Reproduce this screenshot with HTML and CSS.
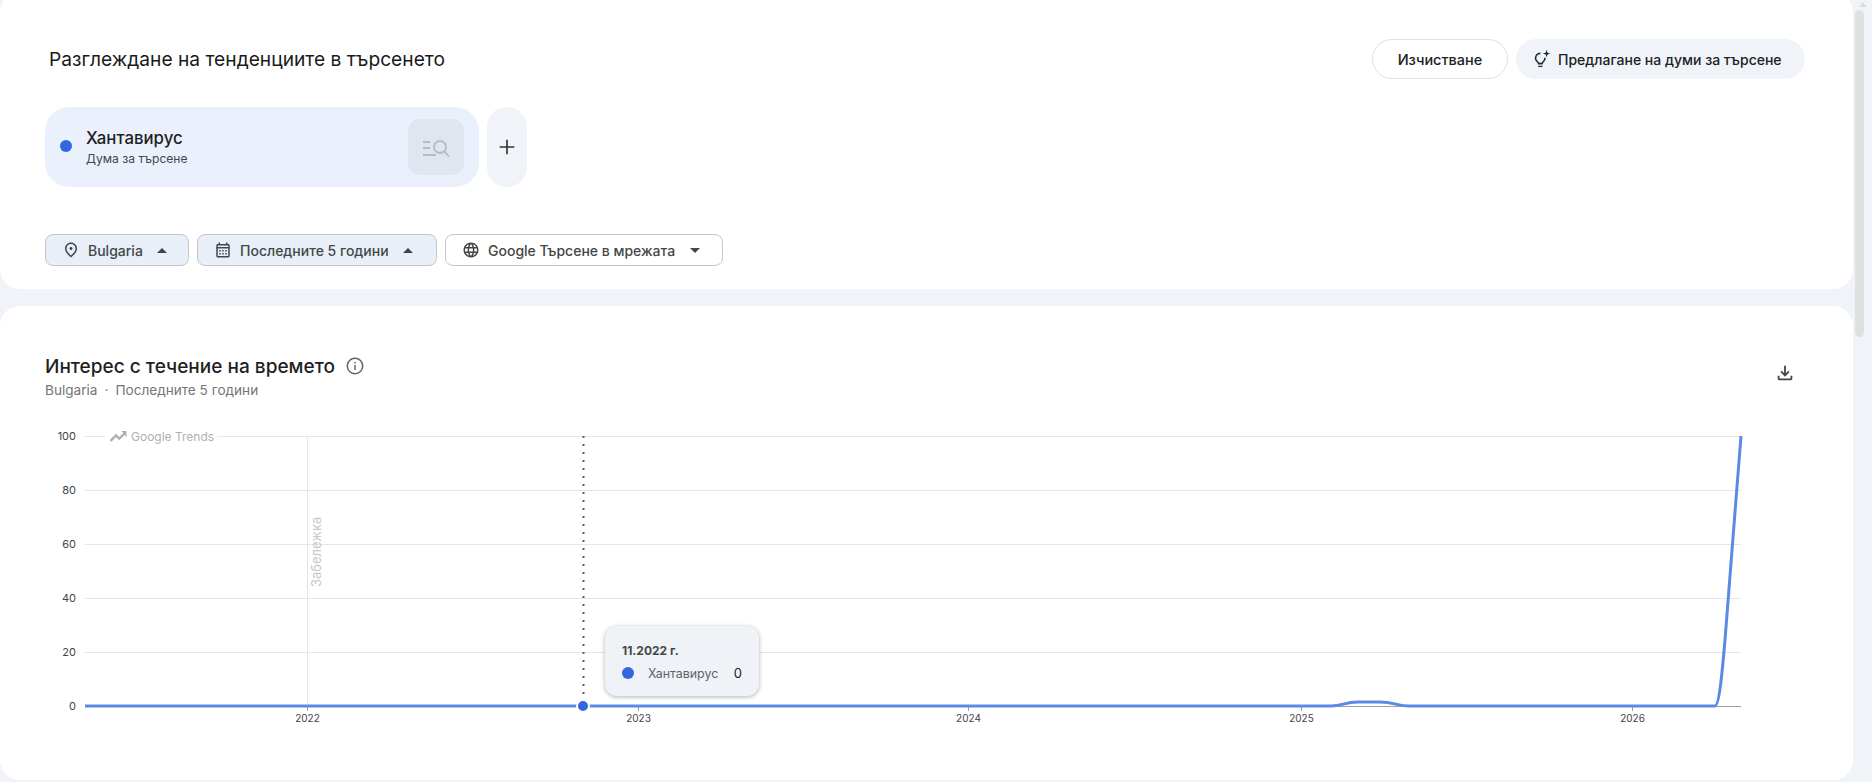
FILE: index.html
```html
<!DOCTYPE html>
<html lang="bg">
<head>
<meta charset="utf-8">
<title>Google Trends</title>
<link rel="stylesheet" href="styles.css">
</head>
<body>
<div class="page">
  <main class="main">
    <section class="card explore">
      <div class="head-row">
        <h1 class="title">Разглеждане на тенденциите в търсенето</h1>
        <div class="actions">
          <button class="btn btn-clear">Изчистване</button>
          <button class="btn btn-suggest">
            <svg class="ic-bulb" viewBox="0 0 24 24"><path d="M10 4.2a6.6 6.6 0 0 0-4.4 11.5c.9.9 1.4 1.6 1.4 2.8h6c0-1.2.5-1.9 1.4-2.8A6.6 6.6 0 0 0 16.600 10.600h-2a4.600 4.600 0 0 1-1.400 3.700c-.9.900-1.500 1.500-1.900 2.200H8.700c-.4-.700-1-1.300-1.900-2.200A4.600 4.600 0 0 1 10 6.200zM7.500 20h5v1.700h-5zM17.500 1l1.100 3.400L22 5.500l-3.400 1.100L17.500 10l-1.100-3.400L13 5.500l3.400-1.100z"/></svg>
            <span>Предлагане на думи за търсене</span>
          </button>
        </div>
      </div>
      <div class="terms">
        <div class="term">
          <span class="term-dot"></span>
          <div class="term-text">
            <div class="term-name">Хантавирус</div>
            <div class="term-kind">Дума за търсене</div>
          </div>
          <div class="term-icon">
            <svg viewBox="0 0 28 22"><path d="M1 6H8M1 12H8M1 19H14M22.300 15.300L27 20.500"/><circle cx="18" cy="11" r="6"/></svg>
          </div>
        </div>
        <button class="add-term"><svg viewBox="0 0 24 24"><path d="M11.100 4h1.800v7.100H20v1.800h-7.100V20h-1.800v-7.100H4v-1.800h7.100z"/></svg></button>
      </div>
      <div class="filters">
        <button class="filter open f-geo">
          <svg class="f-ic" viewBox="0 0 24 24"><path d="M12 12c-1.100 0-2-.9-2-2s.9-2 2-2 2 .9 2 2-.9 2-2 2zm6-1.800C18 6.570 15.350 4 12 4s-6 2.570-6 6.200c0 2.340 1.950 5.440 6 9.140 4.050-3.700 6-6.800 6-9.140zM12 2c4.200 0 8 3.220 8 8.200 0 3.320-2.670 7.250-8 11.800-5.330-4.550-8-8.480-8-11.800C4 5.220 7.800 2 12 2z"/></svg>
          <span>Bulgaria</span><i class="caret up"></i>
        </button>
        <button class="filter open f-time">
          <svg class="f-ic" viewBox="0 0 24 24"><path d="M19 4h-1V2h-2v2H8V2H6v2H5c-1.110 0-2 .9-2 2v14c0 1.100.89 2 2 2h14c1.100 0 2-.9 2-2V6c0-1.100-.9-2-2-2zm0 16H5V10h14v10zm0-12H5V6h14v2zM7 12h2v2H7zm4 0h2v2h-2zm4 0h2v2h-2zM7 16h2v2H7zm4 0h2v2h-2zm4 0h2v2h-2z"/></svg>
          <span>Последните 5 години</span><i class="caret up"></i>
        </button>
        <button class="filter f-prop">
          <svg class="f-ic" viewBox="0 0 24 24"><path d="M11.990 2C6.470 2 2 6.480 2 12s4.470 10 9.990 10C17.520 22 22 17.520 22 12S17.520 2 11.990 2zm6.930 6h-2.950c-.32-1.250-.78-2.450-1.380-3.560 1.840.63 3.370 1.910 4.330 3.560zM12 4.040c.83 1.200 1.480 2.530 1.910 3.960h-3.820c.43-1.430 1.080-2.760 1.910-3.960zM4.260 14C4.100 13.360 4 12.690 4 12s.1-1.360.26-2h3.380c-.08.66-.14 1.320-.14 2 0 .68.06 1.340.14 2H4.260zm.82 2h2.950c.32 1.250.78 2.450 1.380 3.560-1.840-.63-3.370-1.900-4.330-3.560zm2.950-8H5.080c.96-1.660 2.490-2.930 4.330-3.560C8.810 5.550 8.350 6.750 8.030 8zM12 19.960c-.83-1.200-1.480-2.530-1.910-3.960h3.820c-.43 1.430-1.080 2.760-1.910 3.960zM14.340 14H9.660c-.09-.66-.16-1.320-.16-2 0-.68.07-1.350.16-2h4.680c.09.65.16 1.320.16 2 0 .68-.07 1.340-.16 2zm.25 5.560c.6-1.110 1.060-2.310 1.380-3.560h2.950c-.96 1.650-2.490 2.930-4.330 3.560zM16.360 14c.08-.66.14-1.320.14-2 0-.68-.06-1.340-.14-2h3.380c.16.64.26 1.310.26 2s-.1 1.360-.26 2h-3.380z"/></svg>
          <span>Google Търсене в мрежата</span><i class="caret"></i>
        </button>
      </div>
    </section>

    <section class="card interest">
      <div class="int-head">
        <div>
          <div class="int-title-row">
            <h2 class="int-title">Интерес с течение на времето</h2>
            <svg class="ic-info" viewBox="0 0 20 20"><circle cx="10" cy="10" r="7.700"/><path d="M10 9v5M10 6v1.400"/></svg>
          </div>
          <div class="int-sub"><span>Bulgaria</span><span class="sep">·</span><span>Последните 5 години</span></div>
        </div>
        <svg class="ic-dl" viewBox="0 0 24 24"><path d="M12 16l-5-5 1.400-1.450 2.600 2.600V4h2v8.150l2.600-2.600L17 11l-5 5zm-6 4c-.55 0-1.020-.2-1.410-.59C4.200 19.020 4 18.550 4 18v-3h2v3h12v-3h2v3c0 .55-.2 1.020-.59 1.410-.39.39-.86.59-1.410.59H6z"/></svg>
      </div>
      <div class="chart">
        <svg class="chart-svg" viewBox="0 420 1853 360">
          <g class="grid">
            <path d="M85 436.500H105M217 436.500H1741"/>
            <path d="M85 490.500H1741"/>
            <path d="M85 544.500H1741"/>
            <path d="M85 598.500H1741"/>
            <path d="M85 652.500H1741"/>
            <path d="M307.500 436V706"/>
          </g>
          <path class="axis" d="M85 706.500H1741"/>
          <g class="ticks">
            <path d="M307.500 706V711M638.500 706V711M968.500 706V711M1301.500 706V711M1632.500 706V711"/>
          </g>
          <g class="ylab">
            <text x="76" y="440">100</text>
            <text x="76" y="494">80</text>
            <text x="76" y="548">60</text>
            <text x="76" y="602">40</text>
            <text x="76" y="656">20</text>
            <text x="76" y="710">0</text>
          </g>
          <g class="xlab">
            <text x="307.500" y="722">2022</text>
            <text x="638.500" y="722">2023</text>
            <text x="968.500" y="722">2024</text>
            <text x="1301.500" y="722">2025</text>
            <text x="1632.500" y="722">2026</text>
          </g>
          <path class="trend-ic" transform="translate(108 426) scale(.84)" d="M16 6l2.290 2.290-4.880 4.880-4-4L2 16.590 4 19l5.410-6 4 4 6.300-6.290L22 13V6z"/>
          <text class="wm" x="131" y="441">Google Trends</text>
          <text class="note" transform="translate(321 587) rotate(-90)">Забележка</text>
          <path class="hover" d="M583.500 436V700"/>
          <path class="line" d="M85 706H1331C1342 706 1345 702 1358 702H1380C1393 702 1398 706 1409 706H1715C1719 706 1722 675 1725 640C1730 575 1736 500 1741 436"/>
          <circle class="pt" cx="583" cy="706" r="6"/>
        </svg>
        <div class="tip">
          <div class="tip-date">11.2022 г.</div>
          <div class="tip-row"><span class="tip-dot"></span><span class="tip-name">Хантавирус</span><span class="tip-val">0</span></div>
        </div>
      </div>
    </section>
  </main>
  <aside class="scroll"><div class="arrow"></div><div class="thumb"></div></aside>
</div>
</body>
</html>
```

FILE: styles.css
```css
html, body { margin: 0; height: 782px; overflow: hidden; }
body { background: #f0f4f9; font-family: Inter, Roboto, sans-serif; color: #1f1f1f; }
button { font-family: inherit; cursor: pointer; }
.page { display: flex; height: 782px; }
.main { width: 1853px; display: flex; flex-direction: column; gap: 17px; margin-top: -8px; }
.scroll { flex: 1; position: relative; }
.arrow { width: 0; height: 0; margin: 2px 0 0 6px; border: 4px solid transparent; border-top: 0; border-bottom: 5px solid #dcdcdc; }
.thumb { width: 9px; height: 327px; margin: 3px 0 0 2px; background: #e0e0e0; border-radius: 5px; }
.card { background: #fff; border-radius: 20px; }

.explore { height: 297px; box-sizing: border-box; padding: 47px 48px 0 45px; }
.head-row { display: flex; justify-content: space-between; align-items: center; height: 40px; }
.title { margin: 0 0 0 4px; font-size: 19.200px; font-weight: 400; color: #1a1a1a; }
.actions { display: flex; gap: 8px; }
.btn { height: 40px; border-radius: 20px; font-size: 14px; font-weight: 500; color: #202124; display: flex; align-items: center; box-sizing: border-box; padding: 0; }
.btn-clear { width: 136px; background: #fff; border: 1px solid #dfe1e5; justify-content: center; font-size: 14.500px; }
.btn-suggest { width: 289px; background: #f0f4f9; border: 0; gap: 6.500px; padding-left: 15.500px; }
.ic-bulb { width: 20px; height: 20px; fill: #1f2a36; }

.terms { display: flex; gap: 8px; margin-top: 28px; }
.term { width: 434px; height: 80px; box-sizing: border-box; background: #eaf1fc; border-radius: 24px; display: flex; align-items: center; padding: 0 15px 0 15px; }
.term-dot { width: 12px; height: 12px; border-radius: 50%; background: #3367e0; margin: -2px 14px 0 0; }
.term-text { flex: 1; }
.term-name { font-size: 16.800px; line-height: 22px; font-weight: 500; color: #1f1f1f; }
.term-kind { font-size: 12.100px; line-height: 16px; color: #444746; margin-top: 2px; }
.term-icon { width: 56px; height: 56px; border-radius: 12px; background: #dfe6f0; display: flex; align-items: center; justify-content: center; }
.term-icon svg { width: 28px; height: 22px; fill: none; stroke: #b3bcc8; stroke-width: 1.800; }
.add-term { width: 40px; height: 80px; border: 0; padding: 0; border-radius: 20px; background: #f0f4f9; display: flex; align-items: center; justify-content: center; }
.add-term svg { width: 22px; height: 22px; fill: #333; }

.filters { display: flex; gap: 8px; margin-top: 47px; }
.filter { height: 32px; box-sizing: border-box; border: 1px solid #c4c7c5; border-radius: 8px; background: #fff; display: flex; align-items: center; padding: 0; font-size: 14px; font-weight: 500; color: #444746; }
.filter.open { background: #e8eff9; }
.f-ic { width: 18px; height: 18px; fill: #444746; margin: 0 8px 0 16px; flex: none; }
.f-geo { width: 144px; }
.f-time { width: 240px; }
.f-prop { width: 278px; }
.caret { width: 0; height: 0; margin-left: 14.500px; border-left: 5px solid transparent; border-right: 5px solid transparent; border-top: 5px solid #444746; }
.caret.up { border-top: 0; border-bottom: 5px solid #444746; }

.interest { height: 474px; }
.int-head { height: 114px; box-sizing: border-box; padding: 48px 57px 0 45px; display: flex; justify-content: space-between; }
.int-title-row { display: flex; align-items: center; gap: 10px; height: 24px; }
.int-title { margin: 0; font-size: 19.050px; font-weight: 500; color: #1f1f1f; }
.ic-info { width: 20px; height: 20px; fill: none; stroke: #5f6368; stroke-width: 1.500; }
.int-sub { font-size: 13.600px; line-height: 20px; margin-top: 2px; color: #757575; }
.sep { margin: 0 7px; }
.ic-dl { width: 22px; height: 22px; fill: #444746; margin-top: 8px; }

.chart { position: relative; }
.chart-svg { display: block; width: 1853px; height: 360px; }
.grid path { stroke: #e6e6e6; stroke-width: 1; fill: none; }
.axis { stroke: #9aa0a6; stroke-width: 1; fill: none; }
.ticks path { stroke: #9aa0a6; stroke-width: 1; fill: none; }
.ylab text { font-size: 11px; fill: #444; text-anchor: end; }
.xlab text { font-size: 10px; fill: #444; text-anchor: middle; }
.trend-ic { fill: #b0b0b0; }
.wm { font-size: 12px; fill: #b0b0b0; }
.note { font-size: 13px; fill: #c8c8c8; }
.hover { stroke: #5f6368; stroke-width: 2; stroke-dasharray: 2 6; fill: none; }
.line { stroke: #5a8ae6; stroke-width: 3; fill: none; }
.pt { fill: #3367e0; stroke: #fff; stroke-width: 2; }

.tip { position: absolute; left: 605px; top: 206px; width: 154px; height: 70px; box-sizing: border-box; padding: 15px 17px 0; background: #eff2f7; border-radius: 12px; box-shadow: 0 1px 4px rgba(60,64,67,.4); }
.tip-date { font-size: 12px; line-height: 20px; font-weight: 700; color: #444746; }
.tip-row { display: flex; align-items: center; margin-top: 1px; height: 22px; }
.tip-dot { width: 12px; height: 12px; border-radius: 50%; background: #3367e0; margin-right: 14px; }
.tip-name { font-size: 12.400px; color: #5f6368; flex: 1; }
.tip-val { font-size: 13px; color: #202124; }
```
